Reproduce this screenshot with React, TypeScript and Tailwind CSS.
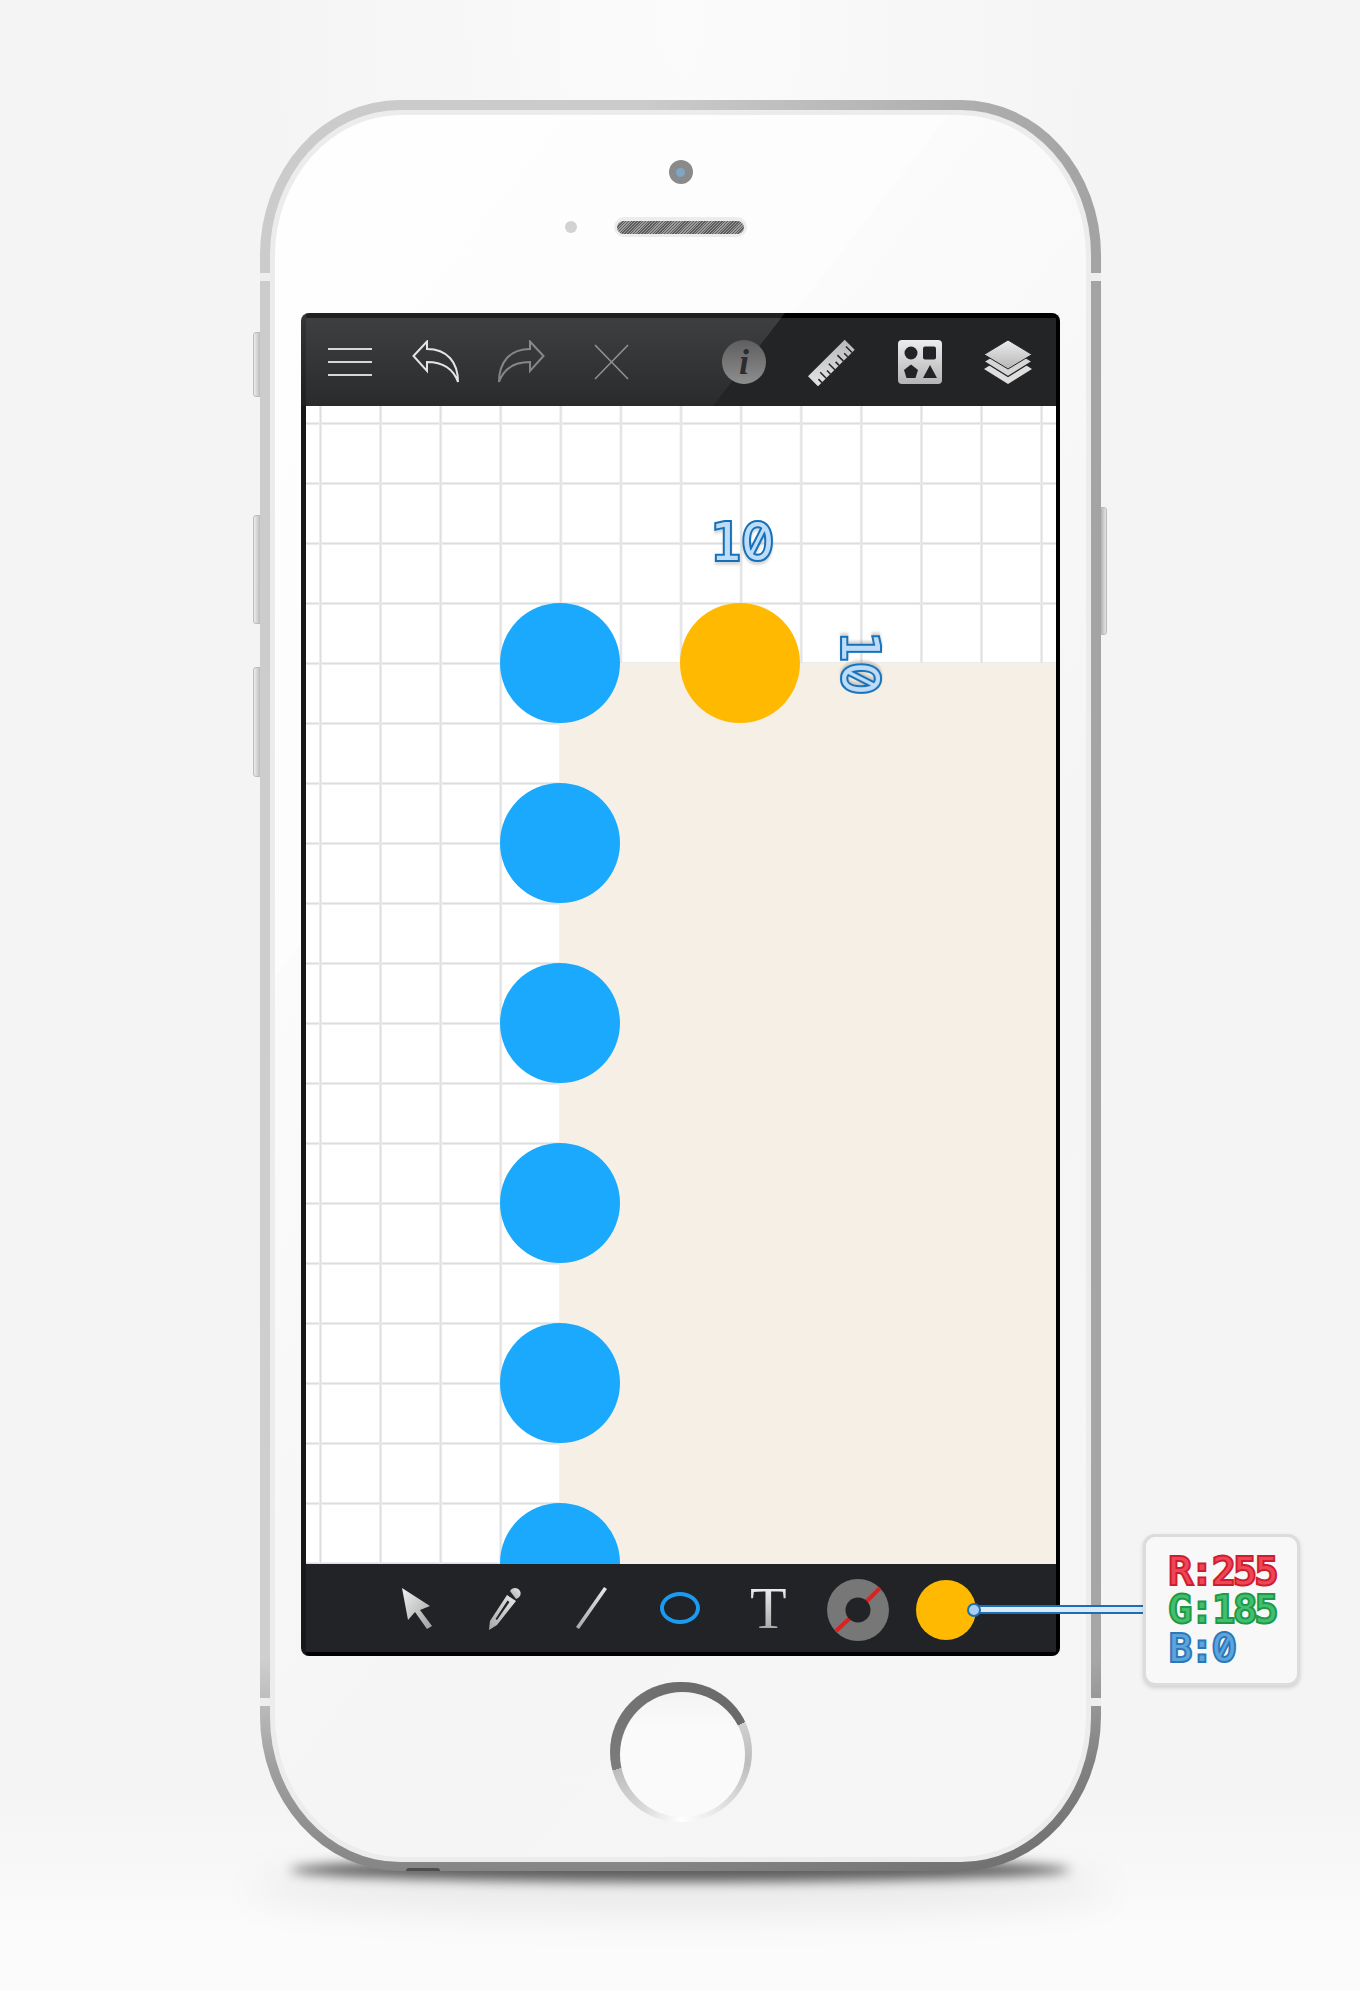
import React from "react";

const mono = "font-['DejaVu_Sans_Mono','Liberation_Mono',monospace]";
const slashed = "font-['Inter',sans-serif] slashed-zero";

function Hamburger() {
  return (
    <div className="flex h-[28px] w-[44px] flex-col justify-between">
      <div className="h-[2px] bg-[#d4d4d4]" />
      <div className="h-[2px] bg-[#d4d4d4]" />
      <div className="h-[2px] bg-[#d4d4d4]" />
    </div>
  );
}

function Undo({ color, flip }: { color: string; flip?: boolean }) {
  return (
    <svg width="47" height="44" viewBox="0 0 47 44" className={flip ? "-scale-x-100" : ""}>
      <path
        d="M1.5 16 L15 1.5 V9 C35 9 46 22 46 42 C41 28 30 22 15 22 V31 Z"
        fill="none"
        stroke={color}
        strokeWidth="2"
        strokeLinejoin="miter"
      />
    </svg>
  );
}

// tick marks run along the lower right edge of the ruler
const rulerTicks = [0, 1, 2, 3, 4, 5, 6, 7]
  .map((i) => {
    const x = 44 - i * 4.3;
    const y = 13.5 + i * 4.3;
    const len = i % 2 === 0 ? 6 : 3.5;
    return `M${x} ${y} L${x - len} ${y - len}`;
  })
  .join(" ");

function Ruler() {
  return (
    <svg width="47" height="47" viewBox="0 0 47 47">
      <defs>
        <linearGradient id="rulerFill" x1="0" y1="0" x2="0" y2="1">
          <stop offset="0" stopColor="#b9b9b9" />
          <stop offset="1" stopColor="#e4e4e4" />
        </linearGradient>
      </defs>
      <path d="M36.7 0.7 L46.7 10.7 L10 47.300 L0 37.300 Z" fill="url(#rulerFill)" />
      <path d={rulerTicks} stroke="#222326" strokeWidth="1.500" />
    </svg>
  );
}

function Shapes() {
  return (
    <svg width="44" height="44" viewBox="0 0 44 44">
      <defs>
        <linearGradient id="shapesFill" x1="0" y1="0" x2="0" y2="1">
          <stop offset="0" stopColor="#ececec" />
          <stop offset="1" stopColor="#b4b4b4" />
        </linearGradient>
      </defs>
      <rect width="44" height="44" rx="4" fill="url(#shapesFill)" />
      <circle cx="13" cy="13" r="6.500" fill="#222326" />
      <rect x="25" y="6.500" width="13" height="13" rx="2" fill="#222326" />
      <path d="M13 24.500 L20 30 L17.500 38 L8.500 38 L6 30 Z" fill="#222326" />
      <path d="M32 25 L39 38 L25 38 Z" fill="#222326" />
    </svg>
  );
}

function Layers() {
  return (
    <svg width="48" height="44" viewBox="0 0 48 44">
      <defs>
        <linearGradient id="layerTop" x1="0" y1="0" x2="0" y2="1">
          <stop offset="0" stopColor="#ededed" />
          <stop offset="1" stopColor="#b6b6b6" />
        </linearGradient>
      </defs>
      <path d="M24 14 L48 29 L24 44 L0 29 Z" fill="#dedede" />
      <path d="M24 7 L48 21.500 L24 36.500 L0 21.500 Z" fill="#d6d6d6" stroke="#222326" strokeWidth="1.200" />
      <path d="M24 0 L48 14.500 L24 29 L0 14.500 Z" fill="url(#layerTop)" stroke="#222326" strokeWidth="1" />
    </svg>
  );
}

function ArrowTool() {
  return (
    <svg width="30" height="41" viewBox="0 0 30 41">
      <defs>
        <linearGradient id="arrowFill" x1="0" y1="0" x2="1" y2="1">
          <stop offset="0" stopColor="#f0f0f0" />
          <stop offset="1" stopColor="#a0a0a0" />
        </linearGradient>
      </defs>
      <path d="M0 0 L28 18 L18 22 L30 38 L25 41 L13 24 L6 32 Z" fill="url(#arrowFill)" />
    </svg>
  );
}

function PencilTool() {
  return (
    <svg width="32" height="43" viewBox="0 0 32 43">
      <defs>
        <linearGradient id="pencilFill" x1="1" y1="0" x2="0" y2="1">
          <stop offset="0" stopColor="#e8e8e8" />
          <stop offset="1" stopColor="#a8a8a8" />
        </linearGradient>
      </defs>
      <path d="M21 4 C23 0 29 0 31 4 C33 8 30 11 27 12 Z" fill="url(#pencilFill)" />
      <path
        d="M18 8 L27 14 L8 38 L0 43 L1 34 Z M18.500 13.500 L6.500 32 L8 33 L20.500 15 Z"
        fillRule="evenodd"
        fill="url(#pencilFill)"
      />
    </svg>
  );
}

function LineTool() {
  return (
    <svg width="31" height="42" viewBox="0 0 31 42">
      <defs>
        <linearGradient id="lineFill" x1="1" y1="0" x2="0" y2="1">
          <stop offset="0" stopColor="#e8e8e8" />
          <stop offset="1" stopColor="#a8a8a8" />
        </linearGradient>
      </defs>
      <path d="M28 0 L31 2 L3 42 L0 40 Z" fill="url(#lineFill)" />
    </svg>
  );
}

function StrokeSwatch() {
  return (
    <svg width="62" height="62" viewBox="0 0 62 62" className="mt-[4px]">
      <circle cx="31" cy="31" r="31" fill="#777777" />
      <path d="M9 52 L23 39 M39 23 L53 9" stroke="#e01f1f" strokeWidth="4" />
      <circle cx="31" cy="31" r="12.500" fill="#222326" />
    </svg>
  );
}

export default function App() {
  return (
    <div className="relative h-[1990px] w-[1360px] overflow-hidden bg-[radial-gradient(ellipse_at_50%_0%,#fbfbfb_0%,rgba(251,251,251,0)_45%),linear-gradient(180deg,#f4f4f4_0%,#f4f4f4_90%,#fbfbfb_97%)] pl-[260px] pt-[100px]">
      {/* soft floor shadow */}
      <div className="absolute left-[250px] top-[1860px] h-[56px] w-[860px] rounded-[50%] bg-black/[0.06] blur-[18px]" />
      <div className="absolute left-[290px] top-[1858px] h-[24px] w-[780px] rounded-[50%] bg-black/60 blur-[6px]" />

      {/* side buttons */}
      <div className="absolute left-[253px] top-[332px] h-[65px] w-[9px] rounded-l-[3px] border border-[#bdbdbd] bg-[linear-gradient(90deg,#ececec,#b4b4b4)]" />
      <div className="absolute left-[253px] top-[515px] h-[109px] w-[9px] rounded-l-[3px] border border-[#bdbdbd] bg-[linear-gradient(90deg,#ececec,#b4b4b4)]" />
      <div className="absolute left-[253px] top-[667px] h-[110px] w-[9px] rounded-l-[3px] border border-[#bdbdbd] bg-[linear-gradient(90deg,#ececec,#b4b4b4)]" />
      <div className="absolute left-[1099px] top-[507px] h-[128px] w-[8px] rounded-r-[3px] border border-[#bdbdbd] bg-[linear-gradient(90deg,#a8a8a8,#e4e4e4)]" />

      {/* phone shell */}
      <div className="relative h-[1771px] w-[841px] rounded-[140px/155px] bg-[linear-gradient(90deg,rgba(0,0,0,0)_45%,rgba(0,0,0,0.2)_100%),linear-gradient(180deg,#cbcbcb_0%,#cfcfcf_88%,#a0a0a0_94%,#858585_100%)] px-[10px] pb-[9px] pt-[10px]">
        <div className="h-full w-full rounded-[130px/145px] bg-[#ececec] p-[5px]">
          <div className="flex h-full w-full flex-col items-center rounded-[126px/141px] bg-[linear-gradient(128deg,#fefefe_0%,#fdfdfd_31%,#fbfbfb_31%,#f5f5f5_62%,#f6f6f6_100%)]">
            {/* camera */}
            <div className="mt-[45px] flex h-[24px] w-[24px] items-center justify-center rounded-full bg-[#8a8a8a]">
              <div className="h-[9px] w-[9px] rounded-full bg-[#7fa6c4]" />
            </div>

            {/* sensor + speaker */}
            <div className="relative mt-[33px] flex h-[20px] w-[133px] items-center justify-center rounded-full bg-[#ececec]">
              <div className="h-[13px] w-[127px] rounded-full bg-[repeating-linear-gradient(135deg,#5c5c5c_0px,#5c5c5c_1px,#9c9c9c_1px,#9c9c9c_2px)]" />
              <div className="absolute left-[-49px] top-[4px] h-[12px] w-[12px] rounded-full bg-[#d2d2d2]" />
            </div>

            {/* screen */}
            <div className="relative mt-[76px] flex h-[1343px] w-[759px] flex-col rounded-[8px] bg-[linear-gradient(90deg,#181818_5px,#000000_5px)] pb-[4px] pl-[5px] pr-[4px] pt-[5px]">
              {/* top toolbar */}
              <div className="flex h-[88px] shrink-0 items-center bg-[#232426] pl-[22px]">
                <Hamburger />
                <div className="ml-[40px]"><Undo color="#e2e2e2" /></div>
                <div className="ml-[39px]"><Undo color="#7c7c7c" flip /></div>
                <div className="ml-[49px]">
                  <svg width="35" height="36" viewBox="0 0 35 36" className="block">
                    <path d="M1 1 L34 35 M34 1 L1 35" stroke="#8a8a8a" strokeWidth="1.500" />
                  </svg>
                </div>
                <div className="relative z-10 ml-[93px] flex h-[44px] w-[44px] items-center justify-center rounded-full bg-[linear-gradient(180deg,#5e5e5e,#8e8e8e)] font-['Liberation_Serif',serif] text-[36px] font-bold italic leading-none text-[#2c2c2e]">
                  i
                </div>
                <div className="relative z-10 ml-[42px]"><Ruler /></div>
                <div className="relative z-10 ml-[43px]"><Shapes /></div>
                <div className="relative z-10 ml-[42px]"><Layers /></div>
              </div>

              {/* glass highlight over the toolbar */}
              <div className="absolute left-0 top-0 h-[93px] w-[500px] bg-[linear-gradient(180deg,rgba(255,255,255,0.13),rgba(255,255,255,0.03))] [clip-path:polygon(0_0,484px_0,412px_100%,0_100%)]" />

              {/* canvas */}
              <div className="relative flex-1 overflow-hidden bg-white bg-[linear-gradient(90deg,#ececec_1px,#dedede_1px,#dedede_2px,#ececec_2px,#ececec_3px,transparent_3px),linear-gradient(180deg,#ececec_1px,#dedede_1px,#dedede_2px,#ececec_2px,#ececec_3px,transparent_3px)] bg-[size:60.1px_60px] bg-[position:13px_16px]">
                <div className="absolute bottom-0 left-[254px] right-0 top-[257px] bg-[#f6efe6]" />

                <div className="absolute left-[194px] top-[197px] flex flex-col gap-[60px]">
                  <div className="h-[120px] w-[120px] shrink-0 rounded-full bg-[#1aa9fc]" />
                  <div className="h-[120px] w-[120px] shrink-0 rounded-full bg-[#1aa9fc]" />
                  <div className="h-[120px] w-[120px] shrink-0 rounded-full bg-[#1aa9fc]" />
                  <div className="h-[120px] w-[120px] shrink-0 rounded-full bg-[#1aa9fc]" />
                  <div className="h-[120px] w-[120px] shrink-0 rounded-full bg-[#1aa9fc]" />
                  <div className="h-[120px] w-[120px] shrink-0 rounded-full bg-[#1aa9fc]" />
                </div>
                <div className="absolute left-[374px] top-[197px] h-[120px] w-[120px] rounded-full bg-[#ffb900]" />

                <div className={`absolute left-[404px] top-[106px] text-[52px] leading-[60px] text-[#bcdcfa] [-webkit-text-stroke:4px_#1570b8] [paint-order:stroke_fill] drop-shadow-[0_3px_1px_rgba(0,0,0,0.15)] ${mono}`}>
                  1<span className={slashed}>0</span>
                </div>
                <div className={`absolute left-[522px] top-[227px] rotate-90 text-[52px] leading-[60px] text-[#bcdcfa] [-webkit-text-stroke:4px_#1570b8] [paint-order:stroke_fill] drop-shadow-[-3px_0_1px_rgba(0,0,0,0.15)] ${mono}`}>
                  1<span className={slashed}>0</span>
                </div>
              </div>

              {/* bottom toolbar */}
              <div className="flex h-[88px] shrink-0 items-center bg-[#222326] pl-[96px]">
                <ArrowTool />
                <div className="ml-[57px]"><PencilTool /></div>
                <div className="ml-[55px]"><LineTool /></div>
                <div className="ml-[53px] h-[32px] w-[40px] rounded-[50%] border-[4px] border-[#1a9af0]" />
                <div className="ml-[50px] bg-[linear-gradient(180deg,#f0f0f0,#a8a8a8)] bg-clip-text font-['Liberation_Serif',serif] text-[60px] leading-[44px] text-transparent">
                  T
                </div>
                <div className="ml-[40px]"><StrokeSwatch /></div>
                <div className="ml-[27px] mt-[4px] h-[60px] w-[60px] rounded-full bg-[#ffb900]" />
              </div>
            </div>

            {/* home button */}
            <div className="mt-[26px] h-[140px] w-[142px] rounded-full bg-[conic-gradient(#6c6c6c_0deg,#6a6a6a_65deg,#cfcfcf_65deg,#bdbdbd_100deg,#e8e8e8_150deg,#ffffff_180deg,#d8d8d8_215deg,#bcbcbc_255deg,#7c7c7c_255deg,#6c6c6c_360deg)] pl-[10px] pt-[10px]">
              <div className="h-[125px] w-[125px] rounded-full bg-[linear-gradient(180deg,#f4f4f4,#fafafa_30%,#fafafa)]" />
            </div>
          </div>
        </div>

        {/* antenna bands */}
        <div className="absolute left-0 top-[173px] h-[8px] w-[10px] bg-[#eeeeee]" />
        <div className="absolute right-0 top-[173px] h-[8px] w-[10px] bg-[#eeeeee]" />
        <div className="absolute left-0 top-[1598px] h-[8px] w-[10px] bg-[#eeeeee]" />
        <div className="absolute right-0 top-[1598px] h-[8px] w-[10px] bg-[#eeeeee]" />
        <div className="absolute left-[146px] top-[1768px] h-[3px] w-[34px] rounded-t-full bg-[#4e4e4e]" />
      </div>

      {/* colour callout */}
      <div className="absolute left-[974px] top-[1605px] h-[9px] w-[170px] border-y-[2px] border-[#1a6fb5] bg-[#dbe9f8]" />
      <div className="absolute left-[967px] top-[1603px] h-[14px] w-[14px] rounded-full border-[2px] border-[#1a6fb5] bg-[#a9cdf3]" />
      <div className={`absolute left-[1143px] top-[1534px] h-[152px] w-[157px] rounded-[12px] border-[3px] border-[#dcdcdc] bg-[#f8f8f8] pl-[23px] pt-[15px] text-[38px] leading-[38px] tracking-[-1.3px] shadow-[0_2px_4px_rgba(0,0,0,0.15)] [paint-order:stroke_fill] ${mono}`}>
        <div className="text-[#ee4656] [-webkit-text-stroke:4px_#cf1d2e]">R:255</div>
        <div className="text-[#43bd70] [-webkit-text-stroke:4px_#1c9a45]">G:185</div>
        <div className="text-[#5ea4dc] [-webkit-text-stroke:4px_#2a78b8]">B:<span className={slashed}>0</span></div>
      </div>
    </div>
  );
}
